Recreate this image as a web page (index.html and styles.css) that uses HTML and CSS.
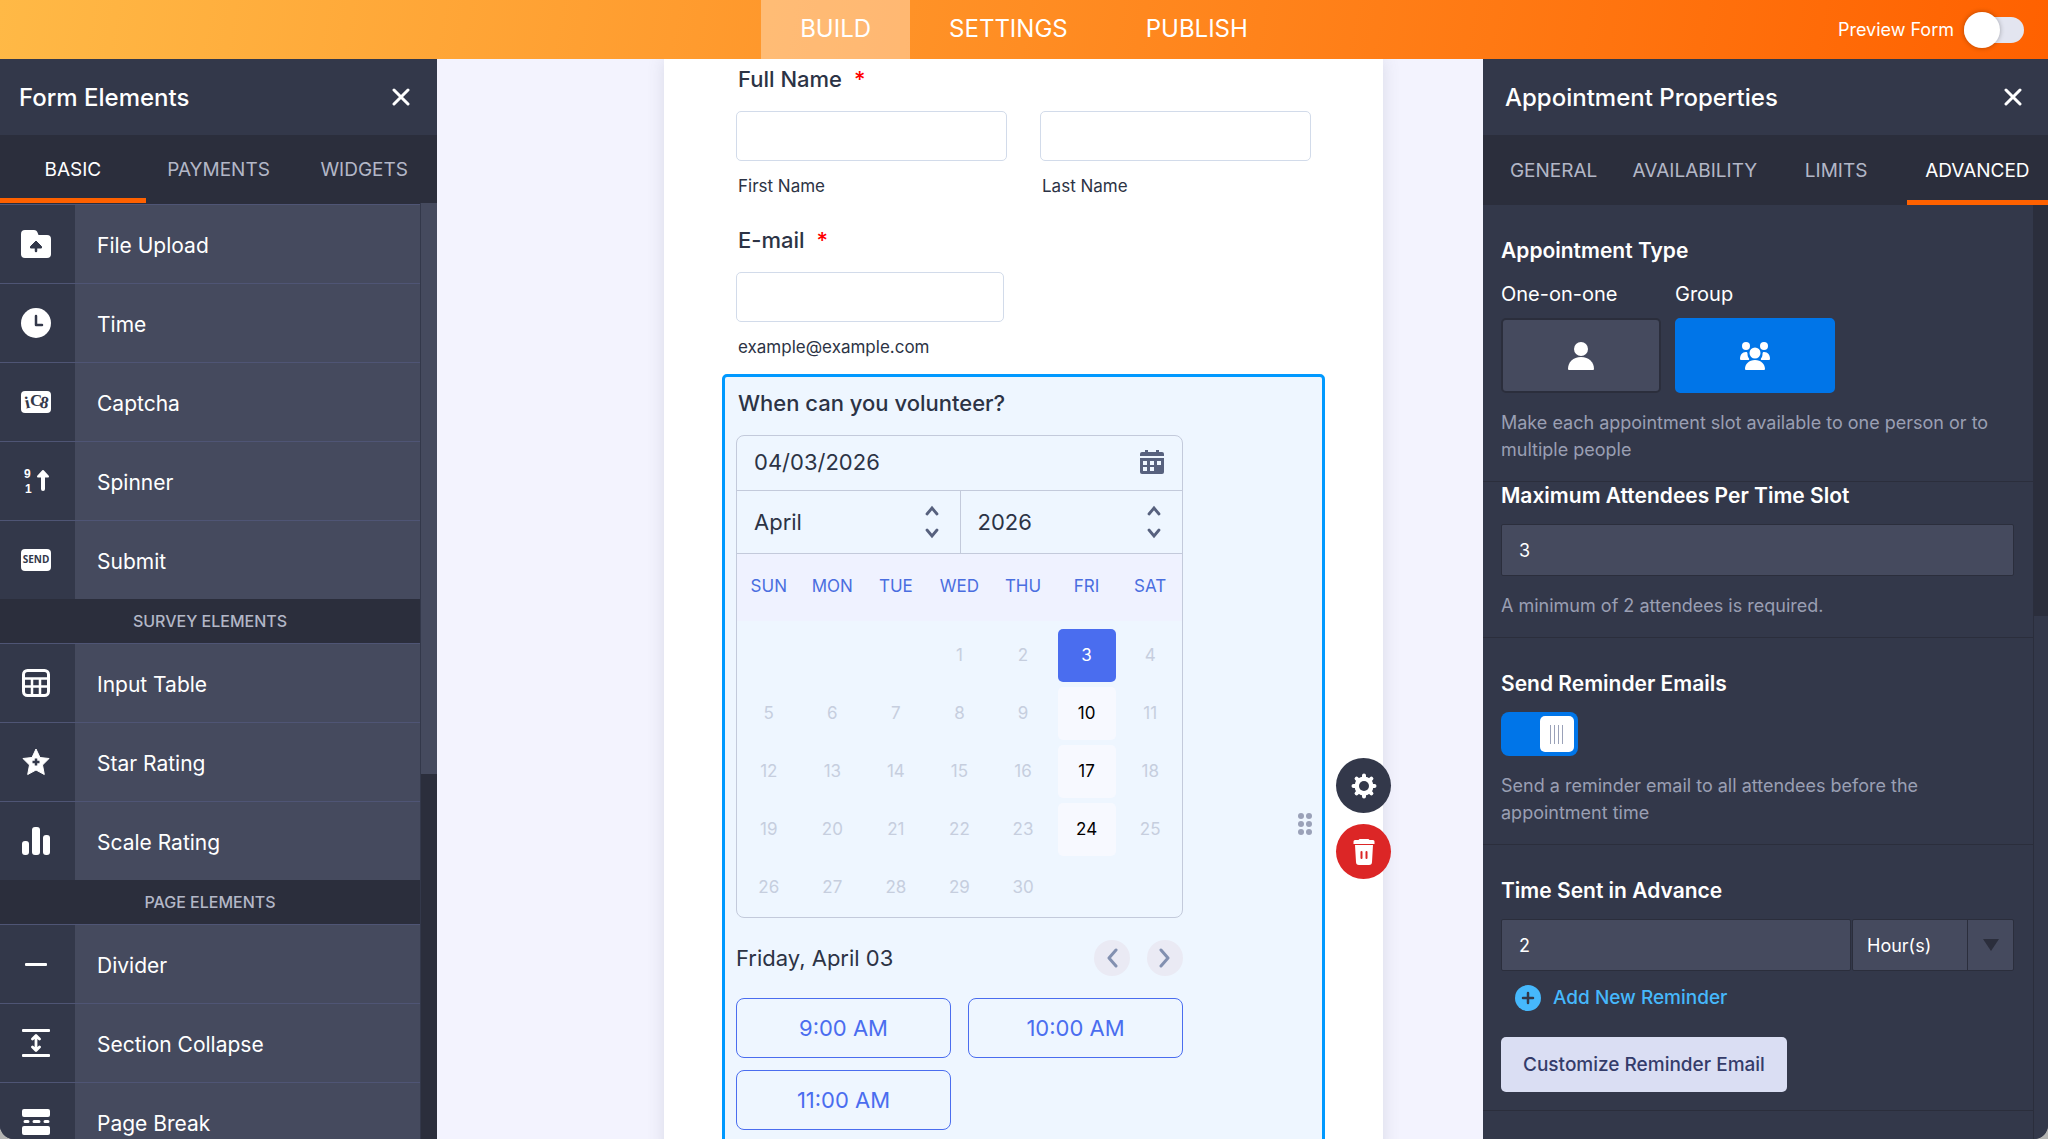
FILE: index.html
```html
<!DOCTYPE html>
<html lang="en">

<head>
    <meta charset="UTF-8">
    <meta name="viewport" content="width=device-width, initial-scale=1.0">
    <title>Form Builder</title>
    <link rel="stylesheet" href="styles.css">
</head>

<body>
    <div class="app">
        <header class="topbar">
            <nav class="topbar-nav">
                <a href="#build" class="active">BUILD</a>
                <a href="#settings">SETTINGS</a>
                <a href="#publish">PUBLISH</a>
            </nav>
            <label class="preview">
                Preview Form
                <input type="checkbox" class="preview-toggle">
            </label>
        </header>

        <div class="workspace">
            <!-- Left panel: form elements -->
            <aside class="panel">
                <div class="panel-header">
                    <h2>Form Elements</h2>
                    <button class="close" aria-label="Close">
                        <svg width="18" height="18" viewBox="0 0 18 18"><path d="M2 2l14 14M16 2L2 16" stroke="#fff" stroke-width="3" stroke-linecap="round"/></svg>
                    </button>
                </div>
                <nav class="tabs">
                    <a href="#basic" class="active">BASIC</a>
                    <a href="#payments">PAYMENTS</a>
                    <a href="#widgets">WIDGETS</a>
                </nav>
                <div class="panel-body">
                    <div class="elements">
                        <button class="element">
                            <span class="element-icon">
                                <svg width="30" height="30" viewBox="0 0 30 30"><path d="M4 1h9c2 0 3 1 3.500 2.500L17.500 6H26a4 4 0 0 1 4 4v15a4 4 0 0 1-4 4H4a4 4 0 0 1-4-4V5a4 4 0 0 1 4-4z" fill="#fff"/><path d="M15 12l5.500 5.500v1.500H9.500v-1.500z" fill="#33384a" stroke="#33384a" stroke-linejoin="round"/><path d="M15 16v6" stroke="#33384a" stroke-width="2.500" stroke-linecap="round"/></svg>
                            </span>
                            <span class="element-name">File Upload</span>
                        </button>
                        <button class="element">
                            <span class="element-icon">
                                <svg width="30" height="30" viewBox="0 0 30 30"><circle cx="15" cy="15" r="15" fill="#fff"/><path d="M15 8v9h6" fill="none" stroke="#33384a" stroke-width="2.500" stroke-linecap="round" stroke-linejoin="round"/></svg>
                            </span>
                            <span class="element-name">Time</span>
                        </button>
                        <button class="element">
                            <span class="element-icon">
                                <svg width="30" height="22" viewBox="0 0 30 22"><rect width="30" height="22" rx="4" fill="#fff"/><g class="captcha-text"><text x="4" y="17" transform="rotate(-12 7 12)">i</text><text x="9" y="15">C</text><text x="19" y="17" transform="rotate(10 23 12)">8</text></g></svg>
                            </span>
                            <span class="element-name">Captcha</span>
                        </button>
                        <button class="element">
                            <span class="element-icon">
                                <svg width="30" height="30" viewBox="0 0 30 30"><g class="spinner-text"><text x="3" y="12">9</text><text x="4" y="27">1</text></g><path d="M22 23V8" stroke="#fff" stroke-width="4" stroke-linecap="round"/><path d="M22 5l5 5.500H17z" fill="#fff" stroke="#fff" stroke-width="2" stroke-linejoin="round"/></svg>
                            </span>
                            <span class="element-name">Spinner</span>
                        </button>
                        <button class="element">
                            <span class="element-icon">
                                <svg width="30" height="22" viewBox="0 0 30 22"><rect width="30" height="22" rx="4" fill="#fff"/><text class="send-text" x="15" y="14" text-anchor="middle">SEND</text></svg>
                            </span>
                            <span class="element-name">Submit</span>
                        </button>

                        <h3 class="elements-title">SURVEY ELEMENTS</h3>
                        <button class="element">
                            <span class="element-icon">
                                <svg width="28" height="28" viewBox="0 0 28 28"><rect x="1.500" y="1.500" width="25" height="25" rx="4" fill="none" stroke="#fff" stroke-width="3"/><path d="M2 9.500h24M2 17.500h24M10 10v16M18 10v16" stroke="#fff" stroke-width="2.500"/></svg>
                            </span>
                            <span class="element-name">Input Table</span>
                        </button>
                        <button class="element">
                            <span class="element-icon">
                                <svg width="28" height="28" viewBox="0 0 28 28"><path d="M14 1l4 8.500 9 1-6.500 6.500 1.800 9.500L14 22l-8.300 4.500L7.500 17 1 10.500l9-1z" fill="#fff" stroke="#fff" stroke-linejoin="round"/><path d="M14 10.500v7M10.500 14h7" stroke="#33384a" stroke-width="2.500"/></svg>
                            </span>
                            <span class="element-name">Star Rating</span>
                        </button>
                        <button class="element">
                            <span class="element-icon">
                                <svg width="28" height="28" viewBox="0 0 28 28" fill="#fff"><rect y="14" width="7" height="14" rx="3"/><rect x="10" width="8" height="28" rx="3"/><rect x="21" y="8" width="7" height="20" rx="3"/></svg>
                            </span>
                            <span class="element-name">Scale Rating</span>
                        </button>

                        <h3 class="elements-title">PAGE ELEMENTS</h3>
                        <button class="element">
                            <span class="element-icon">
                                <svg width="22" height="3" viewBox="0 0 22 3"><rect width="22" height="3" rx="1" fill="#fff"/></svg>
                            </span>
                            <span class="element-name">Divider</span>
                        </button>
                        <button class="element">
                            <span class="element-icon">
                                <svg width="28" height="28" viewBox="0 0 28 28"><path d="M1 1.500h26M1 26.500h26M14 8v12M10.500 10L14 6.500l3.500 3.500M10.500 18l3.500 3.500 3.500-3.500" fill="none" stroke="#fff" stroke-width="2.800" stroke-linecap="round" stroke-linejoin="round"/></svg>
                            </span>
                            <span class="element-name">Section Collapse</span>
                        </button>
                        <button class="element">
                            <span class="element-icon">
                                <svg width="28" height="26" viewBox="0 0 28 26"><rect width="28" height="8" rx="2" fill="#fff"/><rect y="17" width="28" height="9" rx="2" fill="#fff"/><path d="M3 12.500h3M12 12.500h5M23 12.500h3" stroke="#fff" stroke-width="3" stroke-linecap="round"/></svg>
                            </span>
                            <span class="element-name">Page Break</span>
                        </button>
                    </div>
                    <div class="scrollbar"><div class="thumb"></div></div>
                </div>
            </aside>

            <!-- Form -->
            <main class="canvas">
                <form class="form-card">
                    <fieldset class="field">
                        <legend>Full Name <em>*</em></legend>
                        <div class="name-row">
                            <div>
                                <input type="text" id="first" class="text-input">
                                <label for="first" class="sub-label">First Name</label>
                            </div>
                            <div>
                                <input type="text" id="last" class="text-input">
                                <label for="last" class="sub-label">Last Name</label>
                            </div>
                        </div>
                    </fieldset>

                    <div class="field">
                        <label for="email" class="field-label">E-mail <em>*</em></label>
                        <input type="email" id="email" class="text-input email-input">
                        <span class="sub-label">example@example.com</span>
                    </div>

                    <section class="selected">
                        <h3 class="field-label">When can you volunteer?</h3>
                        <div class="appointment">
                            <div class="calendar">
                                <div class="calendar-date">
                                    <input type="text" value="04/03/2026" aria-label="Date">
                                    <svg width="24" height="24" viewBox="0 0 24 24"><path d="M5 0h3v2h8V0h3v2h3a2 2 0 0 1 2 2v2H0V4a2 2 0 0 1 2-2h3z" fill="#57617e"/><path d="M0 8h24v14a2 2 0 0 1-2 2H2a2 2 0 0 1-2-2z" fill="#57617e"/><path d="M3 11h4v4H3zM10 11h4v4h-4zM17 11h4v4h-4zM3 17h4v4H3zM10 17h4v4h-4z" fill="#eef6ff"/></svg>
                                </div>
                                <div class="calendar-selects">
                                    <div class="picker">
                                        <select aria-label="Month"><option>April</option></select>
                                        <svg width="14" height="34" viewBox="0 0 14 34"><path d="M2 9l5-6 5 6M2 25l5 6 5-6" fill="none" stroke="#57617e" stroke-width="2.800" stroke-linecap="round"/></svg>
                                    </div>
                                    <div class="picker">
                                        <select aria-label="Year"><option>2026</option></select>
                                        <svg width="14" height="34" viewBox="0 0 14 34"><path d="M2 9l5-6 5 6M2 25l5 6 5-6" fill="none" stroke="#57617e" stroke-width="2.800" stroke-linecap="round"/></svg>
                                    </div>
                                </div>
                                <table class="days">
                                    <thead>
                                        <tr><th>SUN</th><th>MON</th><th>TUE</th><th>WED</th><th>THU</th><th>FRI</th><th>SAT</th></tr>
                                    </thead>
                                    <tbody>
                                        <tr><td></td><td></td><td></td><td>1</td><td>2</td><td><button type="button" class="day picked">3</button></td><td>4</td></tr>
                                        <tr><td>5</td><td>6</td><td>7</td><td>8</td><td>9</td><td><button type="button" class="day">10</button></td><td>11</td></tr>
                                        <tr><td>12</td><td>13</td><td>14</td><td>15</td><td>16</td><td><button type="button" class="day">17</button></td><td>18</td></tr>
                                        <tr><td>19</td><td>20</td><td>21</td><td>22</td><td>23</td><td><button type="button" class="day">24</button></td><td>25</td></tr>
                                        <tr><td>26</td><td>27</td><td>28</td><td>29</td><td>30</td><td></td><td></td></tr>
                                    </tbody>
                                </table>
                            </div>
                            <div class="day-bar">
                                <span>Friday, April 03</span>
                                <button type="button" class="round" aria-label="Previous day">
                                    <svg width="12" height="20" viewBox="0 0 12 20"><path d="M10 2L3 10l7 8" fill="none" stroke="#8290b0" stroke-width="3" stroke-linecap="round" stroke-linejoin="round"/></svg>
                                </button>
                                <button type="button" class="round" aria-label="Next day">
                                    <svg width="12" height="20" viewBox="0 0 12 20"><path d="M2 2l7 8-7 8" fill="none" stroke="#8290b0" stroke-width="3" stroke-linecap="round" stroke-linejoin="round"/></svg>
                                </button>
                            </div>
                            <div class="slots">
                                <button type="button">9:00 AM</button>
                                <button type="button">10:00 AM</button>
                                <button type="button">11:00 AM</button>
                            </div>
                        </div>
                        <svg class="drag" width="14" height="22" viewBox="0 0 14 22" fill="#9aa1b8"><circle cx="3" cy="3" r="3"/><circle cx="11" cy="3" r="3"/><circle cx="3" cy="11" r="3"/><circle cx="11" cy="11" r="3"/><circle cx="3" cy="19" r="3"/><circle cx="11" cy="19" r="3"/></svg>
                        <div class="actions">
                            <button type="button" class="action" aria-label="Properties">
                                <svg width="26" height="26" viewBox="0 0 26 26"><circle cx="13" cy="13" r="9.500" fill="#fff"/><path d="M13 2.500v21M2.500 13h21M5.600 5.600l14.800 14.800M20.400 5.600L5.600 20.400" stroke="#fff" stroke-width="4" stroke-linecap="round"/><circle cx="13" cy="13" r="5" fill="#33384a"/></svg>
                            </button>
                            <button type="button" class="action delete" aria-label="Delete">
                                <svg width="22" height="26" viewBox="0 0 22 26" fill="#fff"><path d="M6.500 0h9l1 1H20a1.500 1.500 0 0 1 1.500 1.500V5H.5V2.500A1.500 1.500 0 0 1 2 1h3.500z"/><path d="M2 6h18l-1 17a3 3 0 0 1-3 3H6a3 3 0 0 1-3-3z"/><path d="M8.500 13v6M13.500 13v6" stroke="#dc2626" stroke-width="2" stroke-linecap="round"/></svg>
                            </button>
                        </div>
                    </section>
                </form>
            </main>

            <!-- Right panel: properties -->
            <aside class="panel props">
                <div class="panel-header">
                    <h2>Appointment Properties</h2>
                    <button class="close" aria-label="Close">
                        <svg width="18" height="18" viewBox="0 0 18 18"><path d="M2 2l14 14M16 2L2 16" stroke="#fff" stroke-width="3" stroke-linecap="round"/></svg>
                    </button>
                </div>
                <nav class="tabs">
                    <a href="#general">GENERAL</a>
                    <a href="#availability">AVAILABILITY</a>
                    <a href="#limits">LIMITS</a>
                    <a href="#advanced" class="active">ADVANCED</a>
                </nav>
                <div class="panel-body">
                    <div class="settings">
                        <section class="setting">
                            <h3>Appointment Type</h3>
                            <div class="types">
                                <label>
                                    One-on-one
                                    <span class="type-box">
                                        <input type="radio" name="type">
                                        <svg width="26" height="28" viewBox="0 0 26 28" fill="#fff"><circle cx="13" cy="7" r="7"/><path d="M0 27c0-7 5-12 13-12s13 5 13 12a1 1 0 0 1-1 1H1a1 1 0 0 1-1-1z"/></svg>
                                    </span>
                                </label>
                                <label>
                                    Group
                                    <span class="type-box">
                                        <input type="radio" name="type" checked>
                                        <svg width="30" height="28" viewBox="0 0 30 28" fill="#fff"><circle cx="6" cy="4" r="4"/><circle cx="24" cy="4" r="4"/><circle cx="15" cy="11" r="5.500"/><path d="M0 17c0-4 2-7 6-7 1 0 1.500.5 1.500 2 0 2 .5 3 1.500 4.500.5 1 0 1.500-1 1.500H1a1 1 0 0 1-1-1zM30 17c0-4-2-7-6-7-1 0-1.500.5-1.500 2 0 2-.5 3-1.500 4.500-.5 1 0 1.500 1 1.500h7a1 1 0 0 0 1-1zM5 27c0-5 4-9 10-9s10 4 10 9a1 1 0 0 1-1 1H6a1 1 0 0 1-1-1z"/></svg>
                                    </span>
                                </label>
                            </div>
                            <p>Make each appointment slot available to one person or to multiple people</p>
                        </section>
                        <section class="setting tight">
                            <h3><label for="max">Maximum Attendees Per Time Slot</label></h3>
                            <input type="text" id="max" class="box" value="3">
                            <p>A minimum of 2 attendees is required.</p>
                        </section>
                        <section class="setting">
                            <h3><label for="reminders">Send Reminder Emails</label></h3>
                            <input type="checkbox" id="reminders" class="switch" checked>
                            <p>Send a reminder email to all attendees before the appointment time</p>
                        </section>
                        <section class="setting">
                            <h3><label for="advance">Time Sent in Advance</label></h3>
                            <div class="advance">
                                <input type="text" id="advance" class="box" value="2">
                                <div class="unit">
                                    <select class="box" aria-label="Unit"><option>Hour(s)</option></select>
                                    <span class="unit-arrow"></span>
                                </div>
                            </div>
                            <button class="add">
                                <svg width="26" height="26" viewBox="0 0 26 26"><circle cx="13" cy="13" r="13" fill="#46b8fc"/><path d="M13 8v10M8 13h10" stroke="#33384a" stroke-width="2.500" stroke-linecap="round"/></svg>
                                Add New Reminder
                            </button>
                            <button class="customize">Customize Reminder Email</button>
                        </section>
                    </div>
                    <div class="scrollbar"><div class="thumb"></div></div>
                </div>
            </aside>
        </div>
    </div>
</body>

</html>
```
FILE: styles.css
```css
* {
    box-sizing: border-box;
    padding: 0;
    margin: 0;
}

html {
    background-color: #b4b4b2;
}

body {
    font-family: "Inter", "Liberation Sans", sans-serif;
    color: #2c3345;
}

button,
input,
select {
    font: inherit;
    color: inherit;
    border: none;
    background: none;
    appearance: none;
}

button {
    cursor: pointer;
}

a {
    color: inherit;
    text-decoration: none;
}

svg {
    display: block;
    flex-shrink: 0;
}

.app {
    display: flex;
    flex-direction: column;
    height: 100vh;
    overflow: hidden;
    border-radius: 0 0 14px 14px;
    background-color: #f3f3fe;
}

/* Top bar */
.topbar {
    display: grid;
    grid-template-columns: 1fr auto 1fr;
    height: 59px;
    flex-shrink: 0;
    color: #fff;
    background: linear-gradient(100deg, #ffb946, #ff6100);
}

.topbar-nav {
    grid-column: 2;
    display: flex;
    font-size: 24px;
}

.topbar-nav a {
    display: flex;
    align-items: center;
    padding: 0 39px 2px;
}

.topbar-nav a.active {
    background-color: rgba(255, 255, 255, 0.35);
}

.preview {
    display: flex;
    align-items: center;
    justify-content: flex-end;
    gap: 10px;
    padding-right: 24px;
    font-size: 18px;
}

.preview-toggle {
    position: relative;
    width: 60px;
    height: 26px;
    border-radius: 13px;
    background-color: #e3e5f0;
}

.preview-toggle::before {
    content: "";
    position: absolute;
    left: 0;
    top: -5px;
    width: 36px;
    height: 36px;
    border-radius: 50%;
    background-color: #fff;
    box-shadow: 0 0 5px rgba(0, 0, 0, 0.3);
}

.workspace {
    display: grid;
    grid-template-columns: 437px 1fr 565px;
    flex: 1;
    min-height: 0;
}

/* Panels */
.panel {
    display: flex;
    flex-direction: column;
    min-height: 0;
    color: #fff;
    background-color: #2b2e3c;
}

.panel-header {
    display: flex;
    align-items: center;
    justify-content: space-between;
    height: 76px;
    flex-shrink: 0;
    padding: 0 27px 0 19px;
    background-color: #33384a;
}

.panel-header h2 {
    font-size: 24px;
    font-weight: 500;
}

.tabs {
    display: flex;
    height: 68px;
    flex-shrink: 0;
    font-size: 19px;
    color: #b3b7c7;
}

.tabs a {
    flex: 1;
    display: flex;
    align-items: center;
    justify-content: center;
    border-top: 6px solid transparent;
    border-bottom: 5px solid transparent;
}

.tabs a.active {
    color: #fff;
    border-bottom-color: #ff6100;
}

.panel-body {
    display: flex;
    flex: 1;
    min-height: 0;
}

.elements {
    flex: 1;
    overflow: hidden;
    padding-top: 1px;
}

.element {
    display: flex;
    width: 100%;
    height: 79px;
    border-top: 1px solid #4f5575;
    background-color: #454a5e;
    text-align: left;
}

.element-icon {
    display: flex;
    align-items: center;
    justify-content: center;
    width: 75px;
    height: 100%;
    margin-right: 22px;
    padding-right: 3px;
    background-color: #33384a;
}

.element-name {
    align-self: center;
    padding-top: 2px;
    font-size: 21px;
}

.elements-title {
    height: 44px;
    line-height: 44px;
    text-align: center;
    font-size: 16px;
    font-weight: 500;
    color: #b3b7c7;
}

.captcha-text {
    font: bold 17px "Liberation Serif", serif;
    fill: #33384a;
}

.spinner-text {
    font: bold 12px "Liberation Sans", sans-serif;
    fill: #fff;
}

.send-text {
    font: bold 10px "Open Sans", sans-serif;
    fill: #33384a;
}

.scrollbar {
    width: 17px;
    border-left: 1px solid #33384a;
}

.scrollbar .thumb {
    height: 61%;
    background-color: #454a5e;
}

/* Form */
.canvas {
    padding: 0 100px 0 227px;
    overflow: hidden;
}

.form-card {
    min-height: 100%;
    padding: 6px 58px 0;
    background-color: #fff;
    box-shadow: 0 0 16px rgba(84, 95, 111, 0.16);
}

.field {
    padding: 0 14px;
    border: none;
    margin-bottom: 28px;
}

.field + .selected {
    margin-top: -13px;
}

.field-label,
legend {
    display: block;
    padding-left: 2px;
    font-size: 22px;
    font-weight: 500;
    line-height: 28px;
    margin-bottom: 18px;
}

em {
    margin-left: 6px;
    font-style: normal;
    color: #f00;
}

.name-row {
    display: grid;
    grid-template-columns: 1fr 1fr;
    gap: 33px;
}

.text-input {
    display: block;
    width: 100%;
    height: 50px;
    padding: 0 12px;
    border: 1px solid #d2dbea;
    border-radius: 5px;
    background-color: #fff;
}

.email-input {
    width: 268px;
}

.sub-label {
    display: block;
    margin-top: 13px;
    padding-left: 2px;
    font-size: 17px;
    line-height: 24px;
}

.selected {
    position: relative;
    height: 780px;
    padding: 12px 11px;
    border: 3px solid #0099ff;
    border-radius: 5px;
    background-color: #eef6ff;
}

.appointment {
    width: 447px;
    font-size: 22px;
}

.calendar {
    padding-bottom: 1px;
    border: 1px solid #c3cadb;
    border-radius: 8px;
}

.calendar-date {
    display: flex;
    align-items: center;
    height: 55px;
    padding: 0 18px 2px 17px;
    border-bottom: 1px solid #c3cadb;
}

.calendar-date input {
    flex: 1;
    min-width: 0;
}

.calendar-selects {
    display: grid;
    grid-template-columns: 1fr 1fr;
    height: 63px;
    border-bottom: 1px solid #c3cadb;
}

.picker {
    display: flex;
    align-items: center;
    padding: 0 21px 0 17px;
}

.picker + .picker {
    border-left: 1px solid #c3cadb;
}

.picker select {
    flex: 1;
}

.days {
    width: 100%;
    table-layout: fixed;
    border-collapse: collapse;
    font-size: 17px;
    text-align: center;
    color: #c6cede;
}

.days th {
    height: 67px;
    padding-bottom: 4px;
    font-weight: 400;
    color: #4a6ee0;
    background-color: #eff2ff;
}

.days tbody::before {
    content: "";
    display: table-row;
    height: 5px;
}

.days td {
    height: 58px;
}

.day {
    width: 58px;
    height: 53px;
    border-radius: 5px;
    color: #000;
    background-color: #f7f9ff;
}

.day.picked {
    color: #fff;
    background-color: #4a6def;
}

.day-bar {
    display: flex;
    align-items: center;
    gap: 17px;
    margin: 22px 0;
}

.day-bar span {
    flex: 1;
}

.round {
    display: flex;
    align-items: center;
    justify-content: center;
    width: 36px;
    height: 36px;
    border-radius: 50%;
    background-color: #eaeaf4;
}

.slots {
    display: grid;
    grid-template-columns: 1fr 1fr;
    gap: 12px 17px;
}

.slots button {
    height: 60px;
    border: 1px solid #4a6def;
    border-radius: 8px;
    color: #4a6def;
}

.drag {
    position: absolute;
    top: 436px;
    right: 10px;
}

.actions {
    position: absolute;
    top: 381px;
    right: -69px;
    display: grid;
    gap: 11px;
}

.action {
    display: flex;
    align-items: center;
    justify-content: center;
    width: 55px;
    height: 55px;
    border-radius: 50%;
    background-color: #33384a;
}

.action.delete {
    background-color: #dc2626;
}

/* Properties */
.props .tabs {
    height: 70px;
}

.props .panel-header {
    padding: 0 26px 0 22px;
}

.props .scrollbar {
    width: 15px;
    display: flex;
    align-items: flex-end;
    border-color: #2b2e3c;
}

.props .thumb {
    width: 100%;
    height: 56%;
    background-color: #33384a;
}

.settings {
    flex: 1;
    overflow: hidden;
    background-color: #33384a;
}

.setting {
    padding: 32px 19px 18px 18px;
    border-bottom: 1px solid #2b2e3c;
    font-size: 18px;
}

.setting.tight {
    padding-top: 0;
}

.setting h3 {
    margin-bottom: 14px;
    font-size: 21px;
    font-weight: 600;
    line-height: 28px;
}

.setting p {
    margin-top: 16px;
    line-height: 27px;
    color: #9a9fb3;
}

.types {
    display: flex;
    gap: 14px;
    font-size: 20px;
    line-height: 30px;
}

.type-box {
    display: grid;
    place-items: center;
    margin-top: 9px;
}

.type-box > * {
    grid-area: 1 / 1;
    z-index: 1;
}

.type-box input {
    z-index: 0;
    width: 160px;
    height: 75px;
    border: 2px solid #2b2e3c;
    border-radius: 5px;
    background-color: #454a5e;
}

.type-box input:checked {
    border-color: #0075e8;
    background-color: #0075e8;
}

.box {
    display: block;
    width: 100%;
    height: 52px;
    padding: 0 17px;
    border: 1px solid #2b2e3c;
    border-radius: 2px;
    background-color: #454a5e;
}

.switch {
    display: flex;
    justify-content: flex-end;
    width: 77px;
    height: 44px;
    padding: 4px;
    border-radius: 8px;
    background-color: #0075e8;
}

.switch::before {
    content: "";
    width: 34px;
    border-radius: 5px;
    background: repeating-linear-gradient(90deg, #9aa1b8 0 1px, transparent 1px 4px) center / 14px 19px no-repeat #fff;
}

.advance {
    display: grid;
    grid-template-columns: 1fr 162px;
    gap: 1px;
}

.unit {
    position: relative;
}

.unit .box {
    padding-left: 14px;
}

.unit-arrow {
    position: absolute;
    top: 1px;
    right: 1px;
    display: grid;
    place-items: center;
    width: 46px;
    height: 50px;
    border-left: 1px solid #2b2e3c;
}

.unit-arrow::before {
    content: "";
    border: 8px solid transparent;
    border-top: 12px solid #2b2e3c;
    border-bottom: none;
}

.add {
    display: flex;
    align-items: center;
    gap: 12px;
    margin: 14px 0 26px 14px;
    font-size: 19px;
    font-weight: 500;
    line-height: 26px;
    color: #46b8fc;
}

.customize {
    height: 55px;
    padding: 0 22px;
    border-radius: 5px;
    font-size: 19px;
    font-weight: 500;
    color: #343c6a;
    background-color: #dadef3;
}
```
